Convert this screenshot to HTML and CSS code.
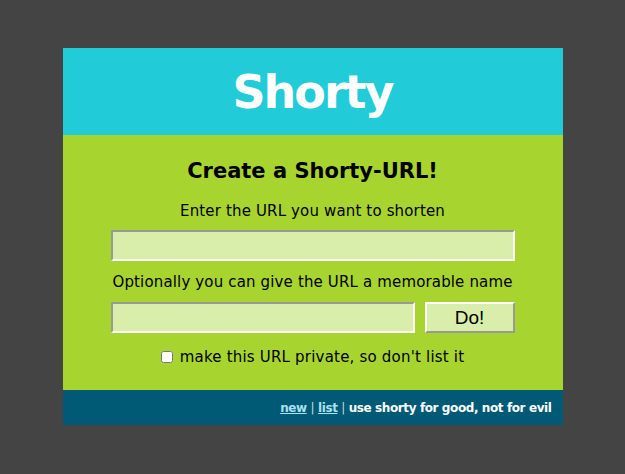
FILE: index.html
```html
<!DOCTYPE html>
<html>
<head>
<meta charset="utf-8">
<title>Shorty</title>
<link rel="stylesheet" href="styles.css">
</head>
<body>
<div class="page">
  <header class="header"><h1 class="logo">Shorty</h1></header>
  <main class="main">
    <h2 class="title">Create a Shorty-URL!</h2>
    <form class="form">
      <label class="label">Enter the URL you want to shorten</label>
      <input class="field field-wide" type="text">
      <label class="label">Optionally you can give the URL a memorable name</label>
      <div class="row">
        <input class="field field-name" type="text">
        <button class="btn" type="button">Do!</button>
      </div>
      <label class="check"><input type="checkbox" class="box"> make this URL private, so don't list it</label>
    </form>
  </main>
  <footer class="footer"><a href="#" class="link">new</a> <span class="sep">|</span> <a href="#" class="link">list</a> <span class="sep">|</span> use shorty for good, not for evil</footer>
</div>
</body>
</html>
```
FILE: styles.css
```css
html, body {
  margin: 0;
  padding: 0;
  background: #444444;
  font-family: "DejaVu Sans", Verdana, sans-serif;
}
.page {
  width: 500px;
  margin: 48px auto 0;
}
.header {
  height: 87px;
  background: #22cbd8;
  display: flex;
  align-items: center;
  justify-content: center;
}
.logo {
  margin: 0;
  color: #ffffff;
  font-size: 46px;
  font-weight: bold;
  letter-spacing: -2px;
  line-height: 1;
  padding-top: 0;
}
.main {
  height: 255px;
  background: #a8d42f;
  box-sizing: border-box;
  padding-top: 23px;
  display: flex;
  flex-direction: column;
  align-items: center;
}
.title {
  margin: 0;
  font-size: 21px;
  line-height: 26px;
  font-weight: bold;
  color: #000;
}
.form {
  width: 404px;
  display: flex;
  flex-direction: column;
  align-items: center;
  margin-top: 18px;
}
.label {
  font-size: 15px;
  line-height: 18px;
  color: #000;
  letter-spacing: 0.15px;
}
.field {
  box-sizing: border-box;
  height: 31px;
  background: #d8eeaa;
  border: 2px solid;
  border-color: #999999 #ffffff #ffffff #999999;
  padding: 2px 4px;
  margin: 0;
  font-size: 14px;
}
.field-wide {
  width: 404px;
  margin-top: 10px;
  margin-bottom: 12px;
}
.row {
  width: 404px;
  display: flex;
  gap: 10px;
  margin-top: 11px;
}
.field-name {
  width: 304px;
}
.btn {
  box-sizing: border-box;
  width: 90px;
  height: 31px;
  background: #d8eeaa;
  border: 2px solid;
  border-color: #ffffff #999999 #999999 #ffffff;
  font-family: "Liberation Sans", Arial, sans-serif;
  font-size: 19px;
  color: #000;
  padding: 0;
}
.check {
  margin-top: 15px;
  font-size: 15px;
  line-height: 18px;
  letter-spacing: 0.2px;
  display: flex;
  align-items: center;
  gap: 7px;
}
.box {
  margin: 0;
  width: 12px;
  height: 12px;
}
.footer {
  height: 35px;
  background: #005a75;
  box-sizing: border-box;
  padding: 0 11px 0 0;
  text-align: right;
  line-height: 36px;
  color: #ffffff;
  font-size: 12px;
  font-weight: bold;
  letter-spacing: -0.4px;
}
.link {
  color: #a6e2f2;
}
.sep {
  color: #d0d8dc;
  font-weight: normal;
}
```
